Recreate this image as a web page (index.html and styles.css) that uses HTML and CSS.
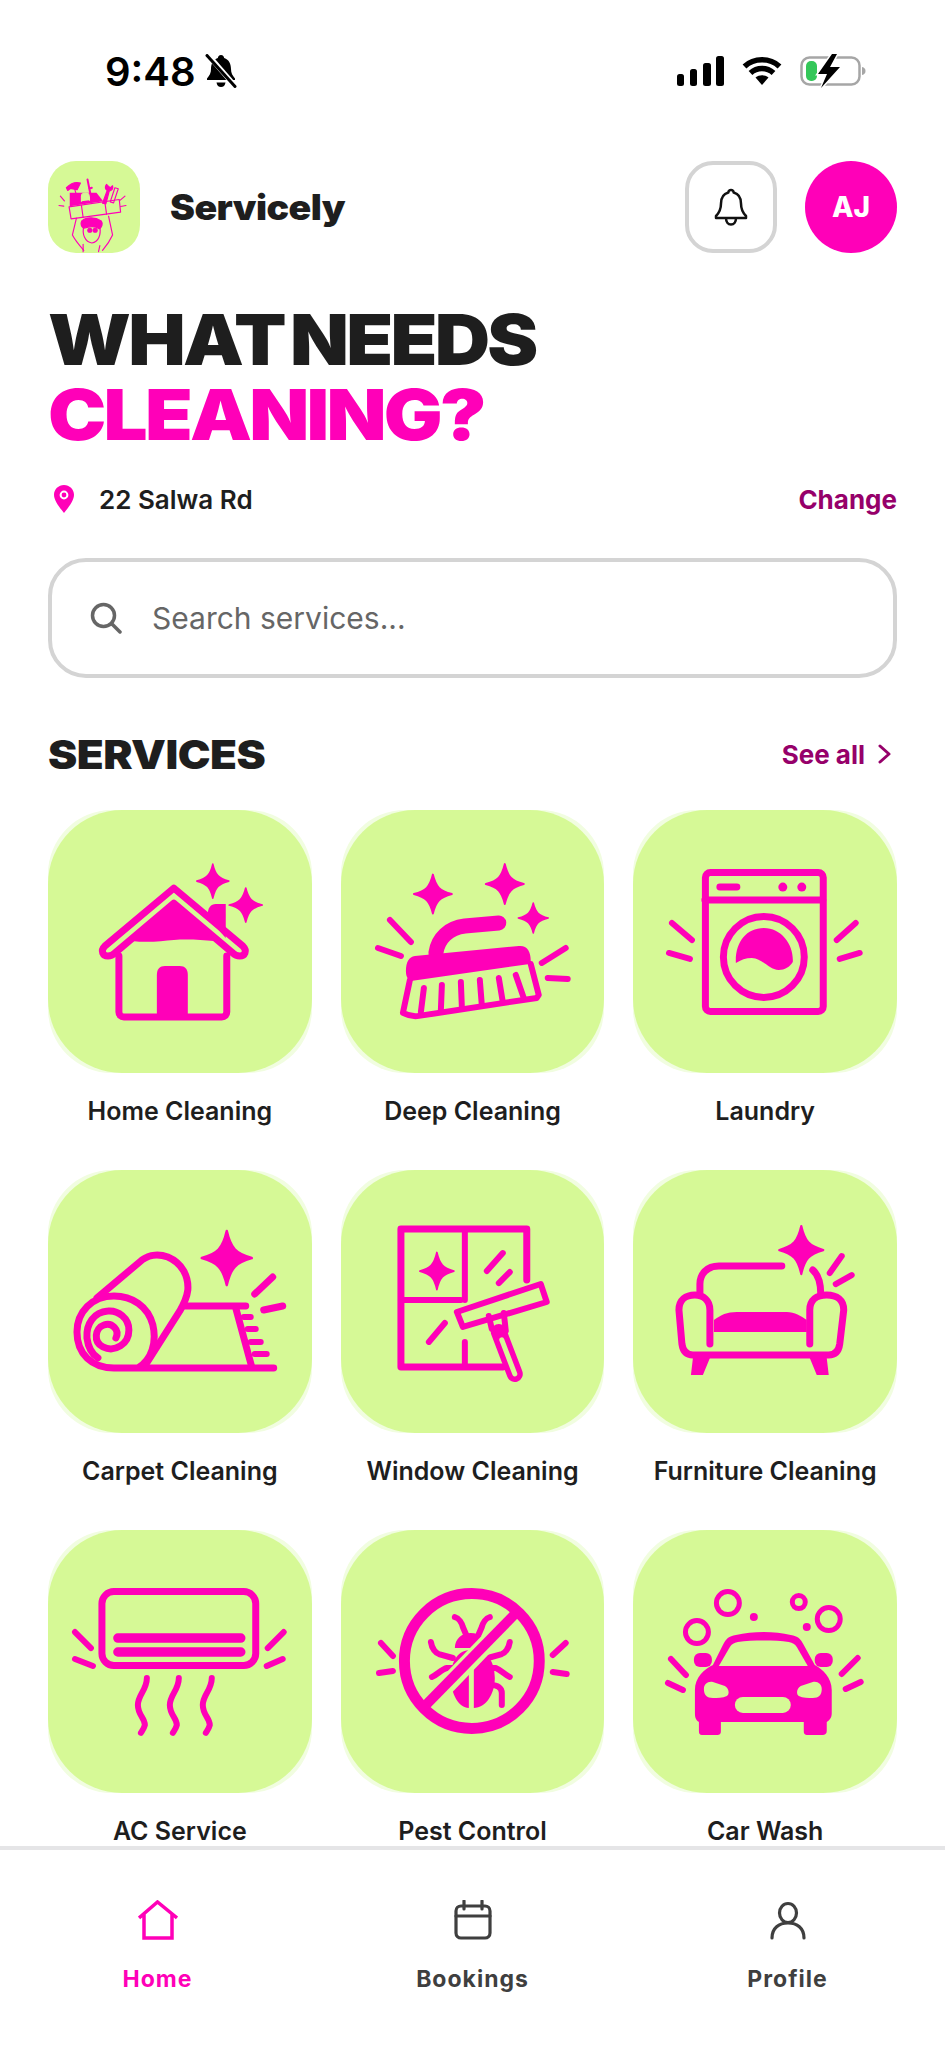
FILE: index.html
```html
<!DOCTYPE html>
<html>
<head>
  <title>Servicely</title>
  <link rel="stylesheet" href="styles.css">
</head>
<body>
<svg class="defs" width="0" height="0">
  <defs>
    <path id="spark" d="M0-10C1.6-3.6 3.6-1.6 10 0 3.6 1.6 1.6 3.6 0 10-1.6 3.6-3.6 1.6-10 0-3.6-1.6-1.6-3.6 0-10Z" fill="#ff00b8" stroke="#ff00b8" stroke-width="1" stroke-linejoin="round"/>
  </defs>
</svg>
<div class="app">
  <div class="status">
    <div class="status-left">
      <span class="time">9:48</span>
      <svg class="muted" width="32" height="34" viewBox="0 0 32 34">
        <path d="M16 1c2 0 3 1.500 3.200 3C24 5.500 26 10 26 15c0 4 1.500 6.500 4 9.500V26H2v-1.500C4.500 21.500 6 19 6 15c0-5 2-9.500 6.800-11C13 2.500 14 1 16 1Z" fill="#000"/>
        <path d="M11.500 28.500h9C20 31.500 18.500 33 16 33s-4-1.500-4.500-4.500Z" fill="#000"/>
        <path d="M4 2l26 30" stroke="#fff" stroke-width="5"/>
        <path d="M2 1.500l28 31" stroke="#000" stroke-width="3" stroke-linecap="round"/>
      </svg>
    </div>
    <div class="status-right">
      <svg width="47" height="30" viewBox="0 0 47 30">
        <rect x="0" y="18" width="7" height="12" rx="2.500"/>
        <rect x="13" y="13" width="7" height="17" rx="2.500"/>
        <rect x="26" y="7" width="8" height="23" rx="2.500"/>
        <rect x="39" y="0" width="8" height="30" rx="2.500"/>
      </svg>
      <svg class="wifi" width="40" height="28" viewBox="0 0 40 28">
        <path d="M2.500 9.500C12 .5 28 .5 37.500 9.500M8.500 16c6.500-6 16.500-6 23 0" fill="none" stroke="#000" stroke-width="5.500"/>
        <path d="M13.500 20.500c3.800-3 9.200-3 13 0L20 28Z" fill="#000"/>
      </svg>
      <svg class="battery" width="66" height="34" viewBox="0 0 66 34">
        <rect x="1.500" y="3.500" width="58" height="27" rx="8" fill="none" stroke="#a6a6a6" stroke-width="2.500"/>
        <rect x="6" y="7" width="11" height="20" rx="5" fill="#34c759"/>
        <path d="M62 13c2.500 .5 3.500 2 3.500 4s-1 3.500-3.500 4Z" fill="#a6a6a6"/>
        <path d="M32 0 18 20h9l-6 14 19-21h-10l7-13Z" fill="#fff" stroke="#fff" stroke-width="3"/>
        <path d="M32 0 18 20h9l-6 14 19-21h-10l7-13Z" fill="#000"/>
      </svg>
    </div>
  </div>

  <div class="content">
    <header class="top">
      <svg class="logo" viewBox="25 35 275 275">
        <rect x="25" y="35" width="275" height="275" fill="#d6f996"/>
        <g fill="none" stroke="#ff00b8" stroke-width="3.500" stroke-linecap="round" stroke-linejoin="round">
          <path d="M90 130h80l20 25-100 15Z" fill="#ff00b8" stroke="none"/>
          <path d="M125 155v-15c0-12 24-12 24 0v12" stroke="#d6f996" fill="#d6f996"/>
          <path d="M88 172l150-22 4 38-148 20Z"/>
          <path d="M125 168l5 36M195 158l5 36"/>
          <path d="M80 115c15-15 30-18 42-14l-10 20-20-4-8 6ZM105 120l12 40" fill="#ff00b8"/>
          <path d="M143 90l12 60M148 118l8-3" stroke-width="6"/>
          <path d="M200 105c-6 8-4 14 2 18l-14 38 10 2 10-38c8-2 12-8 10-16l-6 6-6-4Z" fill="#ff00b8"/>
          <path d="M225 115l-14 42 10 3 14-42Z"/>
          <path d="M62 140l12 14M58 168l14 2M255 140l-14 12M258 168l-16 3"/>
          <path d="M110 206l-12 50c8 16 20 30 34 46M206 200l12 56c-8 18-18 32-30 46"/>
          <path d="M132 230c-6 24 4 48 24 50 20-2 28-24 24-50"/>
          <path d="M130 284v22M180 288l-4 18"/>
          <path d="M126 214c14-12 40-12 58 0 6 8 2 20-6 24-10-8-28-8-46-2-8-4-10-14-6-22Z" fill="#ff00b8"/>
          <circle cx="150" cy="242" r="6" fill="#ff00b8"/>
          <circle cx="166" cy="242" r="6" fill="#ff00b8"/>
        </g>
      </svg>
      <span class="brand">Servicely</span>
      <div class="top-actions">
        <button class="bell-btn">
          <svg width="34" height="38" viewBox="0 0 34 38" fill="none" stroke="#111" stroke-width="2.500" stroke-linejoin="round">
            <path d="M17 2c-1.500 0-2.500 1-2.700 2.500C9 6 7 10.500 7 15.500c0 5-1.500 9-5 12.500v2h30v-2c-3.500-3.500-5-7.500-5-12.500 0-5-2-9.500-7.300-11C19.500 3 18.500 2 17 2Z"/>
            <path d="M12 30c0 4 2 6.500 5 6.500s5-2.500 5-6.500"/>
          </svg>
        </button>
        <div class="avatar">AJ</div>
      </div>
    </header>

    <h1 class="hero"><span class="hero-line first">WHAT NEEDS</span><span class="hero-line hot">CLEANING?</span></h1>

    <div class="location">
      <svg class="pin" width="20" height="28" viewBox="0 0 20 28">
        <path d="M10 0C4.500 0 0 4.300 0 9.800 0 16 6 23 10 28c4-5 10-12 10-18.200C20 4.300 15.500 0 10 0Z" fill="#ff00b8"/>
        <circle cx="10" cy="10" r="3.400" fill="none" stroke="#fff" stroke-width="2"/>
      </svg>
      <span class="address">22 Salwa Rd</span>
      <a class="link change">Change</a>
    </div>

    <div class="search">
      <svg width="32" height="32" viewBox="0 0 32 32" fill="none" stroke="#666" stroke-width="3.500" stroke-linecap="round">
        <circle cx="13.500" cy="13.500" r="11"/>
        <path d="M22 22l8 8"/>
      </svg>
      <span>Search services...</span>
    </div>

    <div class="section-head">
      <h2>SERVICES</h2>
      <a class="link see-all">See all
        <svg width="13" height="20" viewBox="0 0 13 20" fill="none" stroke="#96006a" stroke-width="3" stroke-linecap="round" stroke-linejoin="round"><path d="M2 2l9 8-9 8"/></svg>
      </a>
    </div>

    <div class="grid">
      <div class="service">
        <div class="tile"><div class="tile-inner">
          <svg class="art" viewBox="0 0 264 263">
            <path class="fill" d="M160 104c0-6 3-10 8-10h10v34l-18-20Z"/>
            <path class="line" d="M126 78 57 136c-5 5-2 10 3 10 3 0 5-1 7-3l59-50 59 50c2 2 4 3 7 3 5 0 8-5 3-10Z"/>
            <path class="fill" d="M126 93 84 131c16 2 30 0 42-1 14-1 28 0 40 1Z"/>
            <path class="line" d="M71 146v56c0 3 2 5 5 5h98c3 0 5-2 5-5v-56"/>
            <path class="fill" d="M109 207v-42c0-6 3-9 8-9h15c5 0 8 3 8 9v42Z"/>
            <use href="#spark" transform="translate(165 71) scale(1.6 1.7)"/>
            <use href="#spark" transform="translate(198 95) scale(1.65 1.7)"/>
          </svg>
        </div></div>
        <span class="label">Home Cleaning</span>
      </div>

      <div class="service">
        <div class="tile"><div class="tile-inner">
          <svg class="art" viewBox="0 0 264 263">
            <path class="fat" d="M158 113l-34 3c-16 2-27 12-29 27"/>
            <path class="fill" d="M74 146l104-10c8-1 12 5 12 15l-1 3L70 171c-4-2-5-6-5-10 0-9 3-14 9-15Z"/>
            <path class="line thin" d="M69 170l-7 33c6 3 10 4 16 3l118-18 2-3-8-31"/>
            <path class="line thin" d="M83 178l-3 24M101 175l-1 25M120 172l1 25M139 170l2 25M158 168l4 24M175 165l8 23"/>
            <path class="line thin" d="M49 110l21 22M37 138l23 8M201 153l24-15M207 168l20 1"/>
            <use href="#spark" transform="translate(92 84) scale(1.9 1.95)"/>
            <use href="#spark" transform="translate(164 74) scale(1.9 2)"/>
            <use href="#spark" transform="translate(192.500 108) scale(1.5)"/>
          </svg>
        </div></div>
        <span class="label">Deep Cleaning</span>
      </div>

      <div class="service">
        <div class="tile"><div class="tile-inner">
          <svg class="art" viewBox="0 0 264 263">
            <rect class="line" x="72.500" y="62.500" width="118" height="139" rx="5"/>
            <path class="line" d="M72 90h118M87 77h17"/>
            <circle class="fill" cx="150" cy="77" r="4.500"/>
            <circle class="fill" cx="169" cy="77" r="4.500"/>
            <circle class="line" cx="131" cy="147" r="40.500"/>
            <path class="fill" d="M103 153c-1-20 10-35 28-35 18 0 30 17 29 34-3 5-8 8-14 8-10 0-15-11-27-12-6 0-11 2-16 5Z"/>
            <path class="line thin" d="M39 113l20 17M36 143l21 6M223 113l-19 17M227 143l-20 6"/>
          </svg>
        </div></div>
        <span class="label">Laundry</span>
      </div>

      <div class="service">
        <div class="tile"><div class="tile-inner">
          <svg class="art" viewBox="0 0 264 263">
            <path class="line" d="M90 198C104 190 109 172 105 155 100 136 84 126 66 126 44 126 29 142 29 162 29 184 44 198 66 198H226"/>
            <path class="line" d="M49 128 94 90C102 84 112 84 120 87 134 93 141 106 140 120 139 128 136 134 132 141L97 196"/>
            <path class="line" d="M68 168C72 160 64 152 56 155 47 158 45 172 55 177 67 183 81 174 81 160 81 148 70 140 60 141 46 142 38 154 39 168 40 176 44 184 50 188"/>
            <path class="line" d="M137 136H198M188 138 204 197"/>
            <path class="line thin" d="M196 147h7M200 159h8M203 172h10M207 184h12"/>
            <path class="line" d="M207 124l18-17M216 140l19-4"/>
            <use href="#spark" transform="translate(179 88) scale(2.500 2.700)"/>
          </svg>
        </div></div>
        <span class="label">Carpet Cleaning</span>
      </div>

      <div class="service">
        <div class="tile"><div class="tile-inner">
          <svg class="art" viewBox="0 0 264 263">
            <path class="line" d="M186 110V59H60V197H162"/>
            <path class="line thin" d="M124 59V130M60 130H120M124 172V197"/>
            <path class="line thin" d="M146 101l16-18M158 113l11-11M88 172l16-19"/>
            <use href="#spark" transform="translate(96 101) scale(1.7 1.85)"/>
            <path class="lime-fill" d="M116 142l84-28 6 18-84 25Z"/>
            <path class="line thin" d="M116 142l84-28 6 18-84 25Z"/>
            <path class="line thin" d="M148 146l3 13 14 2-2-18"/>
            <path class="handle" d="M158 162l16 42"/>
            <path class="handle-in" d="M161 170l13 34"/>
          </svg>
        </div></div>
        <span class="label">Window Cleaning</span>
      </div>

      <div class="service">
        <div class="tile"><div class="tile-inner">
          <svg class="art" viewBox="0 0 264 263">
            <path class="line" d="M149 96H86C74 96 67 104 67 114V124M180 100C186 105 188 112 188 124"/>
            <path class="line" d="M77 174V140C77 130 70 125 62 125 53 125 46 130 46 140L49 174C50 181 53 185 60 185H196C203 185 206 181 207 174L211 140C211 130 204 125 194 125 184 125 177 130 177 140V174"/>
            <path class="fill" d="M81 150C88 145 94 142 104 142H154C162 142 168 146 174 150V162H81Z"/>
            <path class="fill" d="M60 188H77L70 205 58 205ZM177 188H194L196 205 184 205Z"/>
            <path class="line thin" d="M197 103l12-17M203 114l16-9"/>
            <use href="#spark" transform="translate(168.500 80) scale(2.200 2.400)"/>
          </svg>
        </div></div>
        <span class="label">Furniture Cleaning</span>
      </div>

      <div class="service">
        <div class="tile"><div class="tile-inner">
          <svg class="art" viewBox="0 0 264 263">
            <rect class="line" x="54" y="61.500" width="154" height="74" rx="12"/>
            <path class="vent" d="M70 108H193M70 122H193"/>
            <path class="line thin" d="M27 102l16 16M27 129l18 7M236 102l-16 16M235 129l-16 7"/>
            <path class="line thin" d="M99 148C99 160 90 165 90 175 90 185 97 188 97 195 96 199 94 201 93 203"/>
            <path class="line thin" d="M131 148C131 160 122 165 122 175 122 185 129 188 129 195 128 199 126 201 125 203"/>
            <path class="line thin" d="M164 148C164 160 155 165 155 175 155 185 162 188 162 195 161 199 159 201 158 203"/>
          </svg>
        </div></div>
        <span class="label">AC Service</span>
      </div>

      <div class="service">
        <div class="tile"><div class="tile-inner">
          <svg class="art" viewBox="0 0 264 263">
            <path class="fill" d="M114 118c0-9 7-15 16-15s16 6 16 15Z"/>
            <path class="fill" d="M130 120c-12 0-20 10-20 28 0 16 8 30 18 30V120ZM133 120c12 0 21 10 21 28 0 16-9 30-21 30Z"/>
            <path class="line thin" d="M114 87c4 1 7 6 8 10l3 7M149 87c-4 1-7 6-8 10l-3 7M90 112c1 7 5 11 8 12l14 4M91 147c5-2 10-8 15-9h8M169 112c-1 7-5 11-8 12l-14 4M169 147c-5-2-9-7-14-9h-6M161 175v-12c0-5-4-8-11-8"/>
            <path class="slash-gap" d="M76 186 184 74"/>
            <path class="slash" d="M82 178 178 80"/>
            <circle class="ring" cx="131" cy="131" r="67.500"/>
            <path class="line thin" d="M40 113l12 13M38 143l14-2M225 113l-13 12M226 144l-14-2"/>
          </svg>
        </div></div>
        <span class="label">Pest Control</span>
      </div>

      <div class="service">
        <div class="tile"><div class="tile-inner">
          <svg class="art" viewBox="0 0 264 263">
            <circle class="bubble" cx="95" cy="73" r="11.500"/>
            <circle class="bubble" cx="64" cy="102" r="11.500"/>
            <circle class="bubble" cx="196" cy="89" r="11.500"/>
            <circle class="bubble" cx="166" cy="72" r="6.500"/>
            <circle class="fill" cx="121" cy="87" r="4"/>
            <circle class="fill" cx="174" cy="97" r="4"/>
            <path class="fill" d="M80 135 90 115C93 109 96 106 103 105 120 101 142 101 158 105 165 106 168 109 171 115L182 135C190 139 199 148 199 160V183C199 188 197 190 194 192V201C194 204 192 205 190 205H175C172 205 171 204 171 201V192H88V201C88 204 87 205 84 205H69C67 205 66 204 66 201V192C63 190 62 188 62 183V160C62 148 71 139 80 135Z"/>
            <path class="lime-fill" d="M86 136 97 117C99 114 101 113 105 112 120 110 142 110 156 112 160 113 162 114 164 117L175 136Z"/>
            <rect class="fill" x="61" y="123" width="18" height="14" rx="6"/>
            <rect class="fill" x="182" y="123" width="18" height="14" rx="6"/>
            <path class="lime-fill" d="M71 159C71 154 75 151 80 152L92 156C96 158 97 164 94 166 90 168 84 168 80 168 74 168 71 165 71 159ZM189 159C189 154 185 151 180 152L168 156C164 158 163 164 166 166 170 168 176 168 180 168 186 168 189 165 189 159Z"/>
            <rect class="lime-fill" x="102" y="167" width="56" height="16" rx="8"/>
            <path class="line thin" d="M38 129l15 16M35 153l15 7M225 128l-16 16M228 152l-15 7"/>
          </svg>
        </div></div>
        <span class="label">Car Wash</span>
      </div>
    </div>
  </div>

  <nav class="tabs">
    <div class="tab active">
      <svg width="40" height="40" viewBox="0 0 40 40" fill="none" stroke="#ff00b8" stroke-width="3.500">
        <path d="M1 18 19.500 2 39 18M6 14V38H34V14"/>
      </svg>
      <span>Home</span>
    </div>
    <div class="tab">
      <svg width="40" height="40" viewBox="0 0 40 40" fill="none" stroke="#3f3f3f" stroke-width="3.200" stroke-linecap="round">
        <rect x="3" y="6" width="34" height="32" rx="5"/>
        <path d="M3 16H37M11 1V9M29 1V9"/>
      </svg>
      <span>Bookings</span>
    </div>
    <div class="tab">
      <svg width="40" height="40" viewBox="0 0 40 40" fill="none" stroke="#3f3f3f" stroke-width="3.200" stroke-linecap="round">
        <ellipse cx="20" cy="13" rx="8.500" ry="9.500"/>
        <path d="M4 38C4 28 11 23 20 23S36 28 36 38"/>
      </svg>
      <span>Profile</span>
    </div>
  </nav>
</div>
</body>
</html>
```

FILE: styles.css
```css
* {
  box-sizing: border-box;
}

body {
  margin: 0;
  background-color: #fff;
  color: #1e1e1e;
  font-family: Inter, "Liberation Sans", sans-serif;
}

.defs {
  display: block;
  height: 0;
}

.app {
  width: 945px;
  height: 2048px;
  display: flex;
  flex-direction: column;
  overflow: hidden;
}

/* status bar */
.status {
  height: 161px;
  flex: none;
  padding: 50px 79px 0 105px;
  display: flex;
  justify-content: space-between;
  align-items: flex-start;
}

.status-left {
  display: flex;
  align-items: center;
  height: 42px;
  gap: 9px;
}

.time {
  font-size: 40px;
  font-weight: 600;
  color: #000;
}

.status-right {
  display: flex;
  align-items: center;
  height: 42px;
  gap: 18px;
}

.content {
  flex: 1;
  min-height: 0;
  overflow: hidden;
  padding: 0 48px;
}

/* header */
.top {
  display: flex;
  align-items: center;
  height: 92px;
}

.logo {
  width: 92px;
  height: 92px;
  border-radius: 28px;
}

.brand {
  margin-left: 30px;
  font-size: 35px;
  font-weight: 900;
  letter-spacing: -0.5px;
  transform: scaleX(1.07);
  transform-origin: left center;
}

.top-actions {
  margin-left: auto;
  display: flex;
  gap: 28px;
}

.bell-btn {
  width: 92px;
  height: 92px;
  padding: 0;
  background-color: #fff;
  border: 4px solid #d4d4d4;
  border-radius: 28px;
  display: flex;
  align-items: center;
  justify-content: center;
}

.avatar {
  width: 92px;
  height: 92px;
  border-radius: 50%;
  background-color: #ff00b8;
  color: #fff;
  font-size: 28px;
  font-weight: 800;
  display: flex;
  align-items: center;
  justify-content: center;
}

/* hero */
.hero {
  margin: 50px 0 0;
  font-size: 70px;
  line-height: 74.5px;
  font-weight: 900;
  letter-spacing: -2.5px;
}

.hero-line {
  display: block;
  transform: scaleX(1.115);
  transform-origin: left center;
}

.hero-line.first {
  word-spacing: -6px;
  transform: scaleX(1.095);
}

.hot {
  color: #ff00b8;
}

.location {
  margin-top: 32px;
  height: 30px;
  display: flex;
  align-items: center;
}

.pin {
  margin-left: 6px;
}

.address {
  margin-left: 25px;
  font-size: 26px;
  font-weight: 600;
}

.link {
  color: #96006a;
  font-size: 26px;
  font-weight: 700;
}

.change {
  margin-left: auto;
}

/* search */
.search {
  margin-top: 44px;
  height: 120px;
  border: 4px solid #d4d4d4;
  border-radius: 38px;
  padding-left: 38px;
  display: flex;
  align-items: center;
  gap: 30px;
  color: #666;
  font-size: 30px;
}

/* services */
.section-head {
  margin-top: 52px;
  height: 48px;
  display: flex;
  align-items: center;
  justify-content: space-between;
}

.section-head h2 {
  margin: 0;
  font-size: 40px;
  font-weight: 900;
  letter-spacing: -0.5px;
  transform: scaleX(1.1);
  transform-origin: left center;
}

.see-all {
  display: flex;
  align-items: center;
  gap: 13px;
  padding-right: 6px;
}

.grid {
  margin-top: 32px;
  display: grid;
  grid-template-columns: repeat(3, 1fr);
  column-gap: 29px;
  row-gap: 44px;
}

.service {
  display: flex;
  flex-direction: column;
  align-items: center;
}

.tile {
  width: 100%;
  height: 263px;
  background-color: #f1fde0;
  border-radius: 64px;
}

.tile-inner {
  width: 100%;
  height: 100%;
  background-color: #d6f996;
  border-radius: 74px;
}

.art {
  display: block;
  width: 100%;
  height: 100%;
}

.label {
  margin-top: 23px;
  font-size: 25px;
  line-height: 30px;
  font-weight: 600;
  white-space: nowrap;
}

/* icon strokes */
.line {
  fill: none;
  stroke: #ff00b8;
  stroke-width: 7;
  stroke-linecap: round;
  stroke-linejoin: round;
}

.thin {
  stroke-width: 6;
}

.fat {
  fill: none;
  stroke: #ff00b8;
  stroke-width: 15;
  stroke-linecap: round;
}

.fill {
  fill: #ff00b8;
}

.lime-fill {
  fill: #d6f996;
}

.vent {
  fill: none;
  stroke: #ff00b8;
  stroke-width: 9.5;
  stroke-linecap: round;
}

.handle {
  fill: none;
  stroke: #ff00b8;
  stroke-width: 16;
  stroke-linecap: round;
}

.handle-in {
  fill: none;
  stroke: #d6f996;
  stroke-width: 5;
  stroke-linecap: round;
}

.slash {
  fill: none;
  stroke: #ff00b8;
  stroke-width: 10;
}

.slash-gap {
  fill: none;
  stroke: #d6f996;
  stroke-width: 18;
}

.ring {
  fill: none;
  stroke: #ff00b8;
  stroke-width: 11;
}

.bubble {
  fill: none;
  stroke: #ff00b8;
  stroke-width: 5;
}

/* bottom tabs */
.tabs {
  flex: none;
  height: 202px;
  border-top: 4px solid #e5e5e7;
  background-color: #fff;
  display: grid;
  grid-template-columns: repeat(3, 1fr);
  padding-top: 50px;
}

.tab {
  display: flex;
  flex-direction: column;
  align-items: center;
  gap: 25px;
  color: #3f3f3f;
  font-size: 23px;
  line-height: 28px;
  font-weight: 700;
  letter-spacing: 1px;
}

.tab.active {
  color: #ff00b8;
}
```
